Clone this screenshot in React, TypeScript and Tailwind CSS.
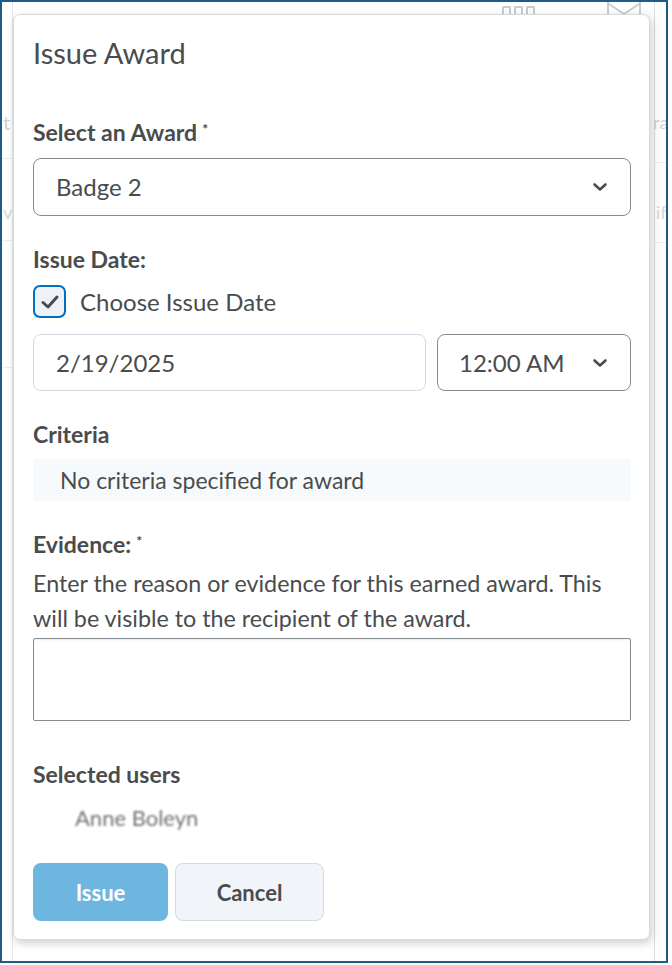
import React from "react";

const font = { fontFamily: "Lato, 'Noto Sans', sans-serif" };

function Chevron() {
  return (
    <svg width="16" height="10" viewBox="0 0 16 10" className="shrink-0">
      <polyline
        points="2.5,2.5 8,7.5 13.5,2.5"
        fill="none"
        stroke="#494c4e"
        strokeWidth="2.6"
        strokeLinecap="round"
        strokeLinejoin="round"
      />
    </svg>
  );
}

function Label({ children, required }: { children: React.ReactNode; required?: boolean }) {
  return (
    <div className="text-[23px] leading-[28px] font-bold text-[#494c4e]">
      {children}
      {required && <span className="ml-[5px] align-top text-[14px] leading-[22px] font-bold">*</span>}
    </div>
  );
}

function PageBehind() {
  // faint page content sitting under the dialog
  return (
    <div className="absolute inset-0">
      <div className="absolute left-[10px] top-0 h-full w-px bg-[#e3e6ea]" />
      <div className="absolute left-[652px] top-0 h-full w-px bg-[#dadde1]" />
      <div className="absolute left-0 top-[156px] h-px w-[10px] bg-[#eceef1]" />
      <div className="absolute left-0 top-[238px] h-px w-[10px] bg-[#eceef1]" />
      <div className="absolute left-0 top-[365px] h-px w-[10px] bg-[#eceef1]" />
      <div className="absolute left-[652px] top-[160px] h-px w-[14px] bg-[#eceef1]" />
      <div className="absolute left-[652px] top-[240px] h-px w-[14px] bg-[#eceef1]" />
      <div className="absolute left-[1px] top-[108px] text-[20px] leading-[24px] text-[#cfd3d7]">t</div>
      <div className="absolute left-[1px] top-[198px] text-[18px] leading-[24px] text-[#d5d9dd]">v</div>
      <div className="absolute left-[651px] top-[108px] text-[18px] leading-[24px] text-[#cfd3d7]">ra</div>
      <div className="absolute left-[654px] top-[198px] text-[18px] leading-[24px] text-[#d5d9dd]">if</div>
      <div className="absolute left-[500px] top-[4px] flex gap-[3px]">
        <div className="h-[10px] w-[9px] rounded-t-[2px] border-2 border-b-0 border-[#c9cdd1]" />
        <div className="h-[10px] w-[9px] rounded-t-[2px] border-2 border-b-0 border-[#c9cdd1]" />
        <div className="h-[10px] w-[9px] rounded-t-[2px] border-2 border-b-0 border-[#c9cdd1]" />
      </div>
      <svg className="absolute left-[604px] top-0" width="36" height="16" viewBox="0 0 36 16">
        <polyline points="2,0 2,14 34,14 34,0" fill="none" stroke="#c9cdd1" strokeWidth="2" />
        <polyline points="3,2 18,12 33,2" fill="none" stroke="#c9cdd1" strokeWidth="2" />
      </svg>
    </div>
  );
}

export default function App() {
  return (
    <div className="w-[672px] h-[965px] bg-white" style={font}>
      <div className="relative w-[668px] h-[963px] border-2 border-[#1d5c87] bg-white overflow-hidden">
        <PageBehind />

        <div className="absolute left-[11px] top-[12px] w-[637px] h-[926px] rounded-[7px] border border-[#d8dbde] bg-white shadow-[2px_3px_10px_rgba(0,0,0,0.2)] px-[19px] pt-[20px]">
          <h1 className="text-[29px] leading-[36px] font-normal text-[#494c4e]">Issue Award</h1>

          <div className="mt-[47px]">
            <Label required>Select an Award</Label>
          </div>
          <div className="mt-[12px] flex h-[58px] w-[598px] items-center justify-between rounded-[8px] border border-[#868c8f] pl-[22px] pr-[22px]">
            <span className="text-[24px] text-[#494c4e]">Badge 2</span>
            <Chevron />
          </div>

          <div className="mt-[29px]">
            <Label>Issue Date:</Label>
          </div>
          <div className="mt-[12px] flex h-[33px] items-center gap-[14px]">
            <div className="flex h-[33px] w-[33px] items-center justify-center rounded-[7px] border-2 border-[#006fbf] bg-[#eef1f5]">
              <svg width="20" height="16" viewBox="0 0 20 16">
                <polyline
                  points="3,8.5 8,13 17,3"
                  fill="none"
                  stroke="#494c4e"
                  strokeWidth="3"
                  strokeLinecap="round"
                  strokeLinejoin="round"
                />
              </svg>
            </div>
            <span className="text-[24px] text-[#494c4e]">Choose Issue Date</span>
          </div>

          <div className="mt-[16px] flex h-[57px] w-[598px] gap-[11px]">
            <div className="flex flex-1 items-center rounded-[8px] border border-[#d3d9e3] pl-[22px]">
              <span className="text-[24px] text-[#494c4e]">2/19/2025</span>
            </div>
            <div className="flex w-[194px] items-center justify-between rounded-[8px] border border-[#868c8f] pl-[21px] pr-[22px]">
              <span className="text-[24px] text-[#494c4e]">12:00 AM</span>
              <Chevron />
            </div>
          </div>

          <div className="mt-[29px]">
            <Label>Criteria</Label>
          </div>
          <div className="mt-[11px] flex h-[42px] w-[598px] items-center bg-[#f7fafc] pl-[27px]">
            <span className="text-[23px] text-[#494c4e]">No criteria specified for award</span>
          </div>

          <div className="mt-[29px]">
            <Label required>Evidence:</Label>
          </div>
          <p className="mt-[8px] w-[598px] text-[23.3px] leading-[35px] text-[#494c4e]">
            Enter the reason or evidence for this earned award. This will be visible to the recipient of the award.
          </p>
          <div className="mt-[2px] h-[83px] w-[598px] rounded-[2px] border border-[#868c8f] shadow-[inset_0_1px_2px_rgba(0,0,0,0.08)]" />

          <div className="mt-[39px]">
            <Label>Selected users</Label>
          </div>
          <div className="mt-[16px] pl-[42px] text-[22px] leading-[28px] text-[#6e7376] blur-[1px]">Anne Boleyn</div>

          <div className="mt-[31px] flex gap-[7px]">
            <button
              type="button"
              className="h-[58px] w-[135px] rounded-[8px] bg-[#6cb6e0] text-[22px] font-bold text-white"
            >
              Issue
            </button>
            <button
              type="button"
              className="h-[58px] w-[149px] rounded-[8px] border border-[#d3d9e3] bg-[#f1f4f8] text-[22px] font-bold text-[#494c4e]"
            >
              Cancel
            </button>
          </div>
        </div>
      </div>
    </div>
  );
}
